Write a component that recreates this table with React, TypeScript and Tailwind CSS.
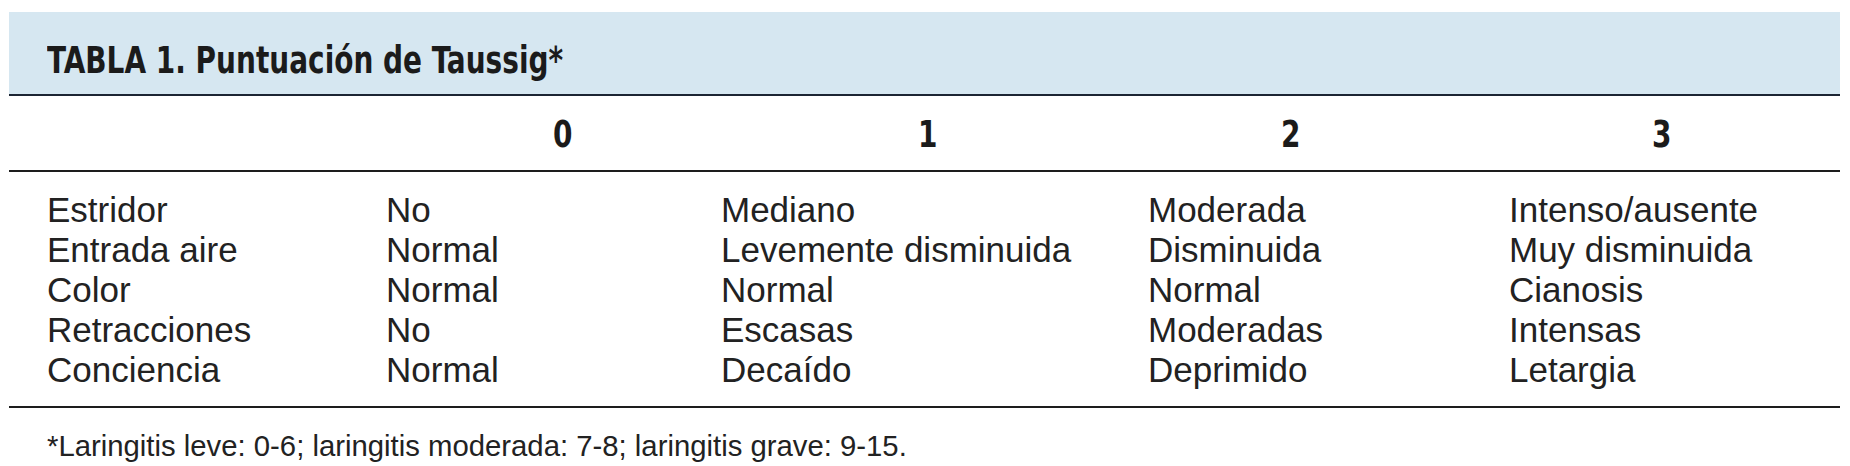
const rows = [
  ['Estridor', 'No', 'Mediano', 'Moderada', 'Intenso/ausente'],
  ['Entrada aire', 'Normal', 'Levemente disminuida', 'Disminuida', 'Muy disminuida'],
  ['Color', 'Normal', 'Normal', 'Normal', 'Cianosis'],
  ['Retracciones', 'No', 'Escasas', 'Moderadas', 'Intensas'],
  ['Conciencia', 'Normal', 'Decaído', 'Deprimido', 'Letargia'],
]

const cols = 'grid grid-cols-[339px_335px_427px_361px_1fr] pl-[38px]'
// condensed bold face, squeezed a bit more to match the print font
const narrow =
  "inline-block origin-left scale-x-[0.84] font-['DejaVu_Sans_Condensed','DejaVu_Sans',sans-serif] font-bold text-[37px] leading-[37px] text-[#1b1b1b]"

export default function App() {
  return (
    <div className="w-[1850px] h-[466px] overflow-hidden bg-white pt-[12px] pl-[9px] pr-[10px] font-['Liberation_Sans',Arial,sans-serif] text-[#222]">
      {/* title band */}
      <div className="h-[84px] bg-[#d6e7f1] border-b-2 border-[#1c2533] pt-[30px] pl-[38px]">
        <h1 className={`${narrow} whitespace-nowrap`}>TABLA 1. Puntuación de Taussig*</h1>
      </div>

      {/* score header */}
      <div className={`${cols} h-[76px] pt-[20px] border-b-2 border-[#1d1d1d]`}>
        <div />
        <div className="pl-[167px]"><span className={narrow}>0</span></div>
        <div className="pl-[197px]"><span className={narrow}>1</span></div>
        <div className="pl-[133px]"><span className={narrow}>2</span></div>
        <div className="pl-[143px]"><span className={narrow}>3</span></div>
      </div>

      {/* body */}
      <div className="pt-[18px] pb-[16px] border-b-2 border-[#1d1d1d]">
        {rows.map((r) => (
          <div key={r[0]} className={`${cols} text-[35px] leading-[40px]`}>
            {r.map((c, i) => (
              <div key={i} className="whitespace-nowrap">{c}</div>
            ))}
          </div>
        ))}
      </div>

      <p className="pl-[38px] pt-[23px] text-[29.3px] leading-[29px] whitespace-nowrap">
        *Laringitis leve: 0-6; laringitis moderada: 7-8; laringitis grave: 9-15.
      </p>
    </div>
  )
}
